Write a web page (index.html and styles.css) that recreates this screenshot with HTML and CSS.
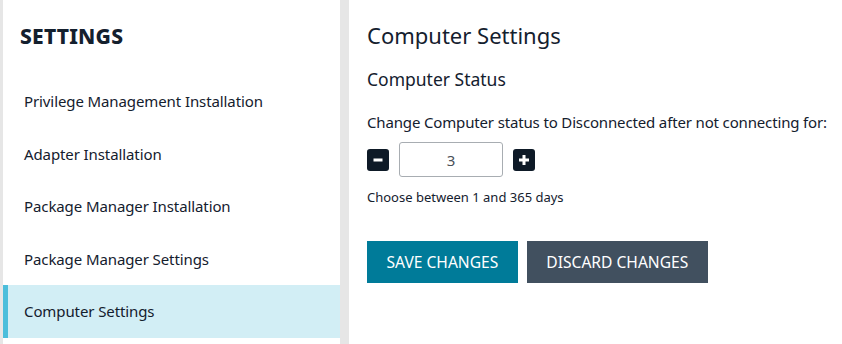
FILE: index.html
```html
<!DOCTYPE html>
<html lang="en">
<head>
    <meta charset="UTF-8">
    <title>Computer Settings</title>
    <link rel="stylesheet" href="styles.css">
</head>
<body>
    <div class="layout">
        <nav class="sidebar">
            <h2 class="sidebar-title">SETTINGS</h2>
            <ul class="nav-list">
                <li class="nav-item">Privilege Management Installation</li>
                <li class="nav-item">Adapter Installation</li>
                <li class="nav-item">Package Manager Installation</li>
                <li class="nav-item">Package Manager Settings</li>
                <li class="nav-item active">Computer Settings</li>
            </ul>
        </nav>

        <main class="content">
            <h1 class="page-title">Computer Settings</h1>
            <h3 class="section-title">Computer Status</h3>
            <p class="field-label">Change Computer status to Disconnected after not connecting for:</p>
            <div class="stepper">
                <button class="step-btn" aria-label="Decrease">
                    <svg width="12" height="12" viewBox="0 0 12 12"><rect x="1.5" y="4.5" width="9" height="3" fill="#fff"/></svg>
                </button>
                <input class="step-input" type="text" value="3">
                <button class="step-btn" aria-label="Increase">
                    <svg width="12" height="12" viewBox="0 0 12 12"><rect x="1" y="4.5" width="10" height="3" fill="#fff"/><rect x="4.5" y="1" width="3" height="10" fill="#fff"/></svg>
                </button>
            </div>
            <p class="hint">Choose between 1 and 365 days</p>
            <div class="actions">
                <button class="btn btn-save">SAVE CHANGES</button>
                <button class="btn btn-discard">DISCARD CHANGES</button>
            </div>
        </main>
    </div>
</body>
</html>
```

FILE: styles.css
```css
html, body {
    height: 100%;
}
body {
    margin: 0;
    background-color: #e6e6e6;
    font-family: 'Noto Sans', 'Open Sans', sans-serif;
    color: #14202e;
}
.layout {
    display: flex;
    height: 100%;
    gap: 9px;
    padding-left: 3px;
}
.sidebar {
    width: 337px;
    background: white;
    flex-shrink: 0;
}
.sidebar-title {
    margin: 0;
    padding: 22px 0 0 17px;
    height: 75px;
    box-sizing: border-box;
    font-size: 21px;
    line-height: 28px;
    font-weight: 800;
    letter-spacing: 0.2px;
}
.nav-list {
    list-style: none;
    margin: 0;
    padding: 0;
}
.nav-item {
    height: 52.5px;
    display: flex;
    align-items: center;
    padding-left: 16px;
    font-size: 15px;
    letter-spacing: -0.1px;
    border-left: 5px solid transparent;
}
.nav-item.active {
    background-color: #d2eef5;
    border-left-color: #4cbedb;
}
.content {
    flex: 1;
    background: white;
    padding: 20px 4px 0 18px;
}
.page-title {
    margin: 0;
    font-size: 22px;
    line-height: 30px;
    font-weight: 400;
}
.section-title {
    margin: 17px 0 0;
    font-size: 17.5px;
    line-height: 24px;
    font-weight: 400;
}
.field-label {
    margin: 21px 0 0;
    font-size: 15px;
    line-height: 20px;
    letter-spacing: -0.15px;
    white-space: nowrap;
}
.stepper {
    display: flex;
    align-items: center;
    gap: 10px;
    margin-top: 10px;
}
.step-btn {
    width: 22px;
    height: 22px;
    padding: 0;
    border: none;
    border-radius: 3px;
    background-color: #0e1a27;
    display: flex;
    align-items: center;
    justify-content: center;
}
.step-input {
    width: 104px;
    height: 35px;
    box-sizing: border-box;
    border: 1px solid #a8adb2;
    border-radius: 3px;
    text-align: center;
    font-family: inherit;
    font-size: 15px;
    color: #4a5058;
}
.hint {
    margin: 11px 0 0;
    font-size: 13px;
    line-height: 18px;
}
.actions {
    display: flex;
    gap: 9px;
    margin-top: 35px;
}
.btn {
    height: 42px;
    border: none;
    color: white;
    font-family: inherit;
    font-size: 15.6px;
    padding: 0 19.5px;
}
.btn-save {
    background-color: #007b99;
}
.btn-discard {
    background-color: #41505f;
}
```
